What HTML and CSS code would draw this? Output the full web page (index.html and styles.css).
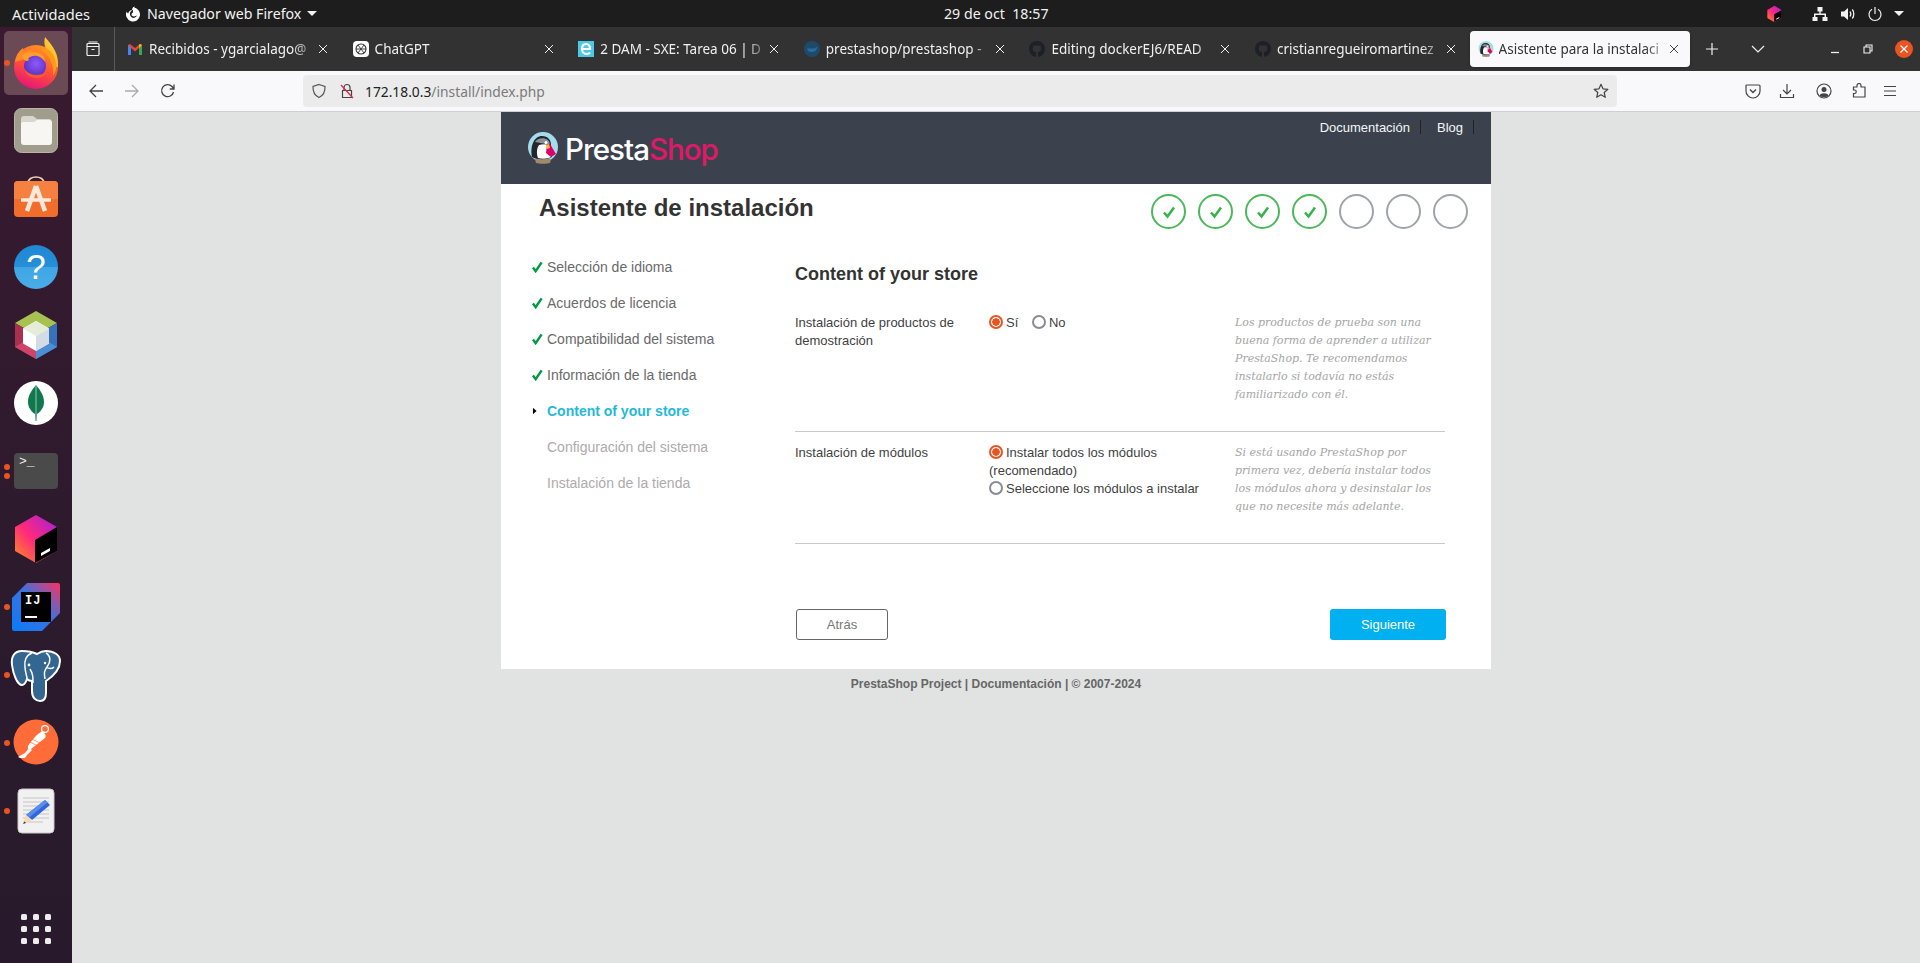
FILE: index.html
```html
<!DOCTYPE html>
<html lang="es">
<head>
<meta charset="utf-8">
<title>Asistente para la instalación</title>
<link rel="stylesheet" href="styles.css">
</head>
<body>
<svg class="defs" width="0" height="0" aria-hidden="true">
  <defs>
    <symbol id="penguin" viewBox="0 0 32 32">
      <circle cx="16" cy="15" r="15" fill="#a4dcee"/>
      <path d="M8 27c2-1 14-1 16 0l-1 4c-3 1-11 1-14 0z" fill="#a08a6c"/>
      <path d="M5 25C3 14 7 4 15 4c6 0 9 4 9 9l1 12c-5 3-15 3-20 0z" fill="#23262b"/>
      <path d="M8 10c2-4 9-5 13-2 2 2 2 4 1 5-5-2-10-2-14-3z" fill="#8d9298"/>
      <path d="M11 26c-2-5-1-10 1-13 3-1 7-1 10 0l2 12c-4 2-9 2-13 1z" fill="#fff"/>
      <path d="M20 12l3 0 6 10-5 3-5-4z" fill="#df0067"/>
      <circle cx="19" cy="10.500" r="1.500" fill="#fff"/>
      <path d="M19 13l3-1 1 4-3 1z" fill="#f7b733"/>
    </symbol>
    <symbol id="ghub" viewBox="0 0 16 16">
      <circle cx="8" cy="8" r="8" fill="#1b2029"/>
      <path d="M4.500 4l1.700.8c1.100-.3 2.500-.3 3.600 0L11.500 4l.3 2c.6 1 .7 3-.3 4-.6.7-1.500 1-2.500 1l.2 5H6.800l.2-5c-1 0-1.900-.3-2.500-1-1-1-.9-3-.3-4z" fill="#333233"/>
    </symbol>
    <symbol id="toolbox" viewBox="0 0 44 48">
      <defs>
        <linearGradient id="tbg" x1="0" y1="1" x2="1" y2="0">
          <stop offset="0" stop-color="#ff9419"/><stop offset=".45" stop-color="#ff2a7a"/><stop offset="1" stop-color="#a31ee0"/>
        </linearGradient>
      </defs>
      <path d="M22 0l21 12v24L22 48 1 36V12z" fill="url(#tbg)"/>
      <path d="M21 25l22-13v24L21 48z" fill="#000"/>
      <path d="M27 38l9-5v3l-9 5z" fill="#fff"/>
    </symbol>
  </defs>
</svg>
<div class="screen">
  <header class="topbar">
    <div class="top-left">
      <span class="activities">Actividades</span>
      <span class="app-menu">
        <svg class="ic16" viewBox="0 0 16 16"><path d="M8 1.500a7 7 0 1 1-6.300 4c.3 1 .8 1.600 1.500 2 .4-2 2-3.500 4-3.600C6.800 3 7.800 1 9.800.6 9.400 1.500 9.500 2.200 10 3c1 .2 2 1 2.300 2.200A4.200 4.200 0 1 0 8 12c2 0 3.300-1 3.800-2.400C10.500 10.500 8 11 6.800 9.500 6 8.400 6.800 6.800 8 6.500z" fill="#fff"/></svg>
        <span>Navegador web Firefox</span>
        <i class="caret"></i>
      </span>
    </div>
    <div class="clock">29 de oct &nbsp;18:57</div>
    <div class="tray">
      <svg class="tray-tb" viewBox="0 0 44 48"><use href="#toolbox"/></svg>
      <svg class="ic16 tray-net" viewBox="0 0 16 16"><path d="M5.500 1h5v4.500H8.700V7.500H14V11h1.500v4h-5v-4H12.500V9H3.500v2H5.500v4h-5v-4H2V7.500h5.300V5.500H5.500z" fill="#f2f2f2"/></svg>
      <svg class="ic16 tray-vol" viewBox="0 0 16 16"><path d="M1 5.500h3L8 2v12L4 10.500H1z" fill="#f2f2f2"/><path d="M10 5.500c1 1.500 1 3.500 0 5M12.300 3.500c2 2.500 2 6.500 0 9" fill="none" stroke="#f2f2f2" stroke-width="1.300"/></svg>
      <svg class="ic16 tray-pow" viewBox="0 0 16 16"><path d="M5 3.300a6 6 0 1 0 6 0M8 1v7" fill="none" stroke="#f2f2f2" stroke-width="1.200"/></svg>
      <i class="caret"></i>
    </div>
  </header>

  <div class="desk">
    <nav class="dock">
      <div class="dock-item active">
        <i class="pip"></i>
        <svg class="dock-ic" viewBox="0 0 56 56">
          <defs>
            <linearGradient id="ffb" x1=".3" y1="1" x2=".7" y2="0"><stop offset="0" stop-color="#e3137f"/><stop offset=".45" stop-color="#ff4b3a"/><stop offset="1" stop-color="#ff9a1a"/></linearGradient>
            <linearGradient id="ffy" x1="0" y1="1" x2=".6" y2="0"><stop offset="0" stop-color="#ff8a1a"/><stop offset="1" stop-color="#ffe13f"/></linearGradient>
            <radialGradient id="ffg" cx=".55" cy=".4" r=".7"><stop offset="0" stop-color="#9059ff"/><stop offset="1" stop-color="#4e2ab0"/></radialGradient>
          </defs>
          <circle cx="28" cy="32" r="22" fill="url(#ffb)"/>
          <path d="M50 32C51 20 46 12 37 2c-1 4-1 8 1 12 7 3 10 10 9 18z" fill="url(#ffy)"/>
          <path d="M38 13c5 3 9 8 10 16 1 4-1 9-3 12 1-9-2-20-12-26z" fill="#ff9a1a"/>
          <path d="M7 27c1-7 4-11 8-14 0 2 1 3 2 4 3-2 6-3 9-3-1 1-2 2-2 3 5-1 11 1 13 6-4-3-12-3-16 1-5 0-8 1-14 3z" fill="#ff8a2a"/>
          <circle cx="27" cy="31" r="11" fill="url(#ffg)"/>
          <path d="M14 20c5-3 12-4 18-1 4 2 5 5 5 8-3-5-9-8-15-5-2 1-2 2-1 3-3 2-5 1-7-5z" fill="#ff9e2a"/>
          <path d="M16 33c1 6 6 10 12 10 5 0 9-2 11-6-3 2-7 3-11 3-5 0-10-3-12-7z" fill="#ff5a2a"/>
        </svg>
      </div>
      <div class="dock-item">
        <svg class="dock-ic" viewBox="0 0 56 56">
          <rect x="6.500" y="5.500" width="43" height="44" rx="7" fill="#a19d8d" stroke="#b9b6a8"/>
          <path d="M13 16a3 3 0 0 1 3-3h9l4 3h12a2.500 2.500 0 0 1 2.500 2.500V22H13z" fill="#d9d6cd"/>
          <path d="M13 21a2 2 0 0 1 2-2h11l3-2h12a3 3 0 0 1 3 3v19a3 3 0 0 1-3 3H16a3 3 0 0 1-3-3z" fill="#f7f6f3"/>
        </svg>
      </div>
      <div class="dock-item">
        <svg class="dock-ic" viewBox="0 0 56 56">
          <path d="M20 12c0-8 16-8 16 0" fill="none" stroke="#f2d3b0" stroke-width="1.700"/>
          <rect x="6" y="10" width="44" height="36" rx="4" fill="#f26d2c"/>
          <path d="M6 14a4 4 0 0 1 4-4h36a4 4 0 0 1 4 4v14H6z" fill="#f58040"/>
          <path d="M28 15L19 40M28 15l9 25" fill="none" stroke="#fde9dc" stroke-width="4.500"/>
          <path d="M13 29h30" stroke="#fde9dc" stroke-width="3.500"/>
        </svg>
      </div>
      <div class="dock-item">
        <svg class="dock-ic" viewBox="0 0 56 56">
          <defs><linearGradient id="hlp" x1="0" y1="0" x2="0" y2="1"><stop offset="0" stop-color="#1f87d4"/><stop offset=".5" stop-color="#268fd8"/><stop offset=".5" stop-color="#3fa5e4"/><stop offset="1" stop-color="#49ade8"/></linearGradient></defs>
          <circle cx="28" cy="28" r="22" fill="url(#hlp)"/>
        </svg>
        <span class="help-q">?</span>
      </div>
      <div class="dock-item">
        <svg class="dock-ic" viewBox="0 0 56 56">
          <path d="M28 4L49 16 28 28 7 16z" fill="#a8c252"/>
          <path d="M7 16l21 12v24L7 40z" fill="#a9314f"/>
          <path d="M49 16L28 28v24l21-12z" fill="#3572bb"/>
          <path d="M7 40l10-6 11 6v12z" fill="#cf4468"/>
          <path d="M49 40l-10-6-11 6v12z" fill="#4a8fd6"/>
          <path d="M28 14l13 7.500v15L28 44l-13-7.500v-15z" fill="#fff"/>
          <path d="M28 14l13 7.500L28 29l-13-7.500z" fill="#e7ecd9"/>
          <path d="M41 21.500v15L28 44V29z" fill="#d3dbe4"/>
        </svg>
      </div>
      <div class="dock-item">
        <svg class="dock-ic" viewBox="0 0 56 56">
          <circle cx="28" cy="28" r="22" fill="#fff"/>
          <path d="M28 10c5 6 8 11 8 17 0 6-4 10-7 12l-.5 7h-1l-.5-7c-3-2-7-6-7-12 0-6 3-11 8-17z" fill="#10784f"/>
          <path d="M28 10v36" stroke="#b8d8c8" stroke-width=".8"/>
        </svg>
      </div>
      <div class="dock-item">
        <i class="pip up"></i><i class="pip down"></i>
        <div class="term"><span class="term-p">&gt;_</span></div>
      </div>
      <div class="dock-item">
        <svg class="dock-ic tb" viewBox="0 0 44 48"><use href="#toolbox"/></svg>
      </div>
      <div class="dock-item">
        <i class="pip"></i>
        <div class="idea">
          <svg class="idea-bg" viewBox="0 0 48 48">
            <defs><linearGradient id="ijg" x1="0" y1="1" x2="1" y2="0"><stop offset="0" stop-color="#087cfa"/><stop offset=".55" stop-color="#3d72e0"/><stop offset="1" stop-color="#fe315d"/></linearGradient></defs>
            <path d="M15 0h31a2 2 0 0 1 2 2v28L30 48H2a2 2 0 0 1-2-2V15z" fill="url(#ijg)"/>
          </svg>
          <div class="idea-box"><span class="idea-t">IJ</span><i class="idea-l"></i></div>
        </div>
      </div>
      <div class="dock-item">
        <i class="pip"></i>
        <svg class="dock-ic" viewBox="0 0 56 56">
          <path d="M14 4C6 4 3 10 4 18c1 8 5 20 10 20 3 0 4-3 5-6 2 2 4 2 5 2v10c0 7 4 10 8 10 5 0 6-4 6-8V34c6-4 14-10 14-20 0-6-6-10-14-10-4 0-6 1-9 3-4-2-10-3-15-3z" fill="#336791" stroke="#fff" stroke-width="2"/>
          <path d="M24 6c-6 2-8 8-7 14 0 5 2 8 2 12M25 36c0-6 0-9-3-14M38 6c5 3 5 9 1 14-3 4-3 6-2 12M38 20c3 2 6 2 8 0" fill="none" stroke="#fff" stroke-width="1.500"/>
          <circle cx="21" cy="18" r="1.400" fill="#fff"/><circle cx="37" cy="16" r="1.200" fill="#fff"/>
        </svg>
      </div>
      <div class="dock-item">
        <i class="pip"></i>
        <svg class="dock-ic" viewBox="0 0 56 56">
          <circle cx="28" cy="27" r="22.500" fill="#ff6c37"/>
          <circle cx="37" cy="14" r="3.400" fill="none" stroke="#fff" stroke-width="1.300"/>
          <path d="M33 17c-4 2-9 8-13 14-1 2 1 4 3 3l14-11c2-2-1-7-4-6zM21 33l-4 5-2 1-5 3 2 1h5l2-3 5-5z" fill="#fff"/>
          <path d="M22 27l8 4M24 24l8 4" stroke="#ff6c37" stroke-width=".7"/>
        </svg>
      </div>
      <div class="dock-item">
        <i class="pip"></i>
        <svg class="dock-ic" viewBox="0 0 56 56">
          <rect x="10" y="6" width="36" height="44" rx="4" fill="#f1f1f1" stroke="#c9c9c9"/>
          <path d="M15 15h26M15 19h26M15 23h26M15 27h26M15 31h26M15 35h26M15 39h20" stroke="#c6c6c6" stroke-width="1.200"/>
          <path d="M37 17l5 5-18 15-6-5z" fill="#2f68d8"/>
          <path d="M37 17l2.500 2.500L21 34.500 18 32z" fill="#5a8cec"/>
          <path d="M18 32l6 5-9 4z" fill="#f6d9b5"/>
          <path d="M16.500 38.500l-1.500 2.500 3-1z" fill="#333"/>
        </svg>
      </div>
      <div class="dock-grid">
        <i></i><i></i><i></i><i></i><i></i><i></i><i></i><i></i><i></i>
      </div>
    </nav>

    <div class="browser">
      <div class="tabbar">
        <div class="tabview">
          <svg class="ic16" viewBox="0 0 16 16"><path d="M2 5.500h12v8a1 1 0 0 1-1 1H3a1 1 0 0 1-1-1zM2 5.500v-2a1 1 0 0 1 1-1h10a1 1 0 0 1 1 1v2M3.500 1h9M6.500 8.500h3" fill="none" stroke="#f0f0f0" stroke-width="1.200"/></svg>
        </div>
        <div class="tabs">
          <div class="tab">
            <svg class="fav" viewBox="0 0 16 16"><path d="M1 14V4l2-1 5 4 5-4 2 1v10h-3V7L8 10.500 4 7v7z" fill="#ea4335"/><path d="M1 14V4l3 2.500V14z" fill="#4285f4"/><path d="M15 14V4l-3 2.500V14z" fill="#34a853"/><path d="M15 4l-3 3V3.800l1-.8z" fill="#fbbc04"/></svg>
            <span class="tab-title">Recibidos - ygarcialago@</span>
            <svg class="tab-x" viewBox="0 0 10 10"><path d="M1 1l8 8M9 1L1 9"/></svg>
          </div>
          <div class="tab">
            <svg class="fav" viewBox="0 0 16 16"><rect width="16" height="16" rx="4" fill="#fff"/><circle cx="8" cy="8" r="5" fill="none" stroke="#333" stroke-width="1.100"/><path d="M5 4l6 8M11 4l-6 8M3 8h10" stroke="#333" stroke-width=".9"/></svg>
            <span class="tab-title">ChatGPT</span>
            <svg class="tab-x" viewBox="0 0 10 10"><path d="M1 1l8 8M9 1L1 9"/></svg>
          </div>
          <div class="tab">
            <svg class="fav" viewBox="0 0 16 16"><rect width="16" height="16" fill="#4cc9e8"/><path d="M4 8h8c0-3-1.500-5-4-5S4 5 4 8c0 3 2 5 4.500 5 1.500 0 3-.5 3.500-1.500" fill="none" stroke="#fff" stroke-width="2.200"/></svg>
            <span class="tab-title">2 DAM - SXE: Tarea 06 | D</span>
            <svg class="tab-x" viewBox="0 0 10 10"><path d="M1 1l8 8M9 1L1 9"/></svg>
          </div>
          <div class="tab">
            <svg class="fav" viewBox="0 0 16 16"><circle cx="8" cy="8" r="8" fill="#1d4a6b"/><path d="M3 7.500h8c.5-1 1-1.500 2-1.500 0 2-1 5-5 5-3 0-4.500-1-5-3.500z" fill="#2a6d99"/></svg>
            <span class="tab-title">prestashop/prestashop -</span>
            <svg class="tab-x" viewBox="0 0 10 10"><path d="M1 1l8 8M9 1L1 9"/></svg>
          </div>
          <div class="tab">
            <svg class="fav" viewBox="0 0 16 16"><use href="#ghub"/></svg>
            <span class="tab-title">Editing dockerEJ6/READ</span>
            <svg class="tab-x" viewBox="0 0 10 10"><path d="M1 1l8 8M9 1L1 9"/></svg>
          </div>
          <div class="tab">
            <svg class="fav" viewBox="0 0 16 16"><use href="#ghub"/></svg>
            <span class="tab-title">cristianregueiromartinez</span>
            <svg class="tab-x" viewBox="0 0 10 10"><path d="M1 1l8 8M9 1L1 9"/></svg>
          </div>
          <div class="tab current">
            <svg class="fav" viewBox="0 0 32 32"><use href="#penguin"/></svg>
            <span class="tab-title">Asistente para la instalaci</span>
            <svg class="tab-x" viewBox="0 0 10 10"><path d="M1 1l8 8M9 1L1 9"/></svg>
          </div>
        </div>
        <span class="newtab">
          <svg class="ic16" viewBox="0 0 16 16"><path d="M8 2v12M2 8h12" stroke="#f0f0f0" stroke-width="1.200"/></svg>
        </span>
        <span class="alltabs">
          <svg class="ic16" viewBox="0 0 16 16"><path d="M2 5l6 6 6-6" fill="none" stroke="#f0f0f0" stroke-width="1.200"/></svg>
        </span>
        <div class="winctl">
          <svg class="ic16" viewBox="0 0 16 16"><path d="M4 11.500h8" stroke="#f0f0f0" stroke-width="1.300"/></svg>
          <svg class="ic16" viewBox="0 0 16 16"><path d="M6 5.500V4h6v6h-2M4 6h6v6H4z" fill="none" stroke="#f0f0f0" stroke-width="1.100"/></svg>
          <span class="win-close"><svg viewBox="0 0 12 12"><path d="M2.500 2.500l7 7M9.500 2.500l-7 7" stroke="#fff" stroke-width="1.300"/></svg></span>
        </div>
      </div>

      <div class="toolbar">
        <div class="nav-btns">
          <svg class="ic16" viewBox="0 0 16 16"><path d="M15 8H2M8 2L2 8l6 6" fill="none" stroke="#444" stroke-width="1.300"/></svg>
          <svg class="ic16" viewBox="0 0 16 16"><path d="M1 8h13M8 2l6 6-6 6" fill="none" stroke="#aaa" stroke-width="1.300"/></svg>
          <svg class="ic16" viewBox="0 0 16 16"><path d="M13.500 9A6 6 0 1 1 12 3.500L14 6M14 1.500V6H9.800" fill="none" stroke="#444" stroke-width="1.300"/></svg>
        </div>
        <div class="urlbar">
          <svg class="ic16" viewBox="0 0 16 16"><path d="M8 1.500l6 2c.2 5-1.500 9-6 11-4.500-2-6.200-6-6-11z" fill="none" stroke="#555" stroke-width="1.200"/></svg>
          <svg class="ic16" viewBox="0 0 16 16"><path d="M3.500 7.500h9v7h-9zM5 7.500V4.500a3 3 0 0 1 6 0v3" fill="none" stroke="#444" stroke-width="1.200"/><path d="M2 2l12 13" stroke="#e22850" stroke-width="1.300"/></svg>
          <span class="url"><span class="host">172.18.0.3</span>/install/index.php</span>
          <svg class="ic16 star" viewBox="0 0 16 16"><path d="M8 1.300l2 4.500 4.900.5-3.700 3.200 1.100 4.800L8 11.800l-4.300 2.500 1.100-4.800L1.100 6.300 6 5.800z" fill="none" stroke="#444" stroke-width="1.200" stroke-linejoin="round"/></svg>
        </div>
        <div class="tool-right">
          <svg class="ic16" viewBox="0 0 16 16"><path d="M2 2h12a1 1 0 0 1 1 1v5a7 7 0 0 1-14 0V3a1 1 0 0 1 1-1z" fill="none" stroke="#444" stroke-width="1.200"/><path d="M5 6.500l3 3 3-3" fill="none" stroke="#444" stroke-width="1.400"/></svg>
          <svg class="ic16" viewBox="0 0 16 16"><path d="M8 1v9.500M4 7l4 4 4-4M1.500 11v3.500h13V11" fill="none" stroke="#444" stroke-width="1.200"/></svg>
          <svg class="ic16" viewBox="0 0 16 16"><circle cx="8" cy="8" r="7" fill="none" stroke="#444" stroke-width="1.200"/><circle cx="8" cy="6.500" r="2.500" fill="#444"/><path d="M3.500 12.500c1-3 8-3 9 0-2 2-7 2-9 0z" fill="#444"/></svg>
          <svg class="ic16" viewBox="0 0 16 16"><path d="M6 2.500a2 2 0 0 1 4 0V4h4v10H2.500v-3.500h1a1.700 1.700 0 0 0 0-3.500h-1V4H6z" fill="none" stroke="#444" stroke-width="1.200"/></svg>
          <svg class="ic16" viewBox="0 0 16 16"><path d="M2 3.500h12M2 8h12M2 12.500h12" stroke="#444" stroke-width="1.200"/></svg>
        </div>
      </div>

      <main class="page">
        <div class="sheet">
          <div class="ps-head">
            <div class="logo">
              <svg class="logo-mark" viewBox="0 0 32 32"><use href="#penguin"/></svg>
              <span class="logo-text">Presta<span class="logo-shop">Shop</span></span>
            </div>
            <ul class="ps-links">
              <li>Documentación</li>
              <li>Blog</li>
            </ul>
          </div>
          <div class="ps-white">
            <div class="title-row">
              <h1>Asistente de instalación</h1>
              <div class="steps">
                <span class="step done"><svg viewBox="0 0 14 14"><path d="M2 7.500l3.500 4L12 2.500" fill="none" stroke="#35b34a" stroke-width="2.500"/></svg></span>
                <span class="step done"><svg viewBox="0 0 14 14"><path d="M2 7.500l3.500 4L12 2.500" fill="none" stroke="#35b34a" stroke-width="2.500"/></svg></span>
                <span class="step done"><svg viewBox="0 0 14 14"><path d="M2 7.500l3.500 4L12 2.500" fill="none" stroke="#35b34a" stroke-width="2.500"/></svg></span>
                <span class="step done"><svg viewBox="0 0 14 14"><path d="M2 7.500l3.500 4L12 2.500" fill="none" stroke="#35b34a" stroke-width="2.500"/></svg></span>
                <span class="step"></span>
                <span class="step"></span>
                <span class="step"></span>
              </div>
            </div>
            <div class="ps-body">
              <ol class="side">
                <li class="ok"><svg viewBox="0 0 12 12"><path d="M1 6.500l3 4L10.500 1" fill="none" stroke="#009a44" stroke-width="2.700"/></svg>Selección de idioma</li>
                <li class="ok"><svg viewBox="0 0 12 12"><path d="M1 6.500l3 4L10.500 1" fill="none" stroke="#009a44" stroke-width="2.700"/></svg>Acuerdos de licencia</li>
                <li class="ok"><svg viewBox="0 0 12 12"><path d="M1 6.500l3 4L10.500 1" fill="none" stroke="#009a44" stroke-width="2.700"/></svg>Compatibilidad del sistema</li>
                <li class="ok"><svg viewBox="0 0 12 12"><path d="M1 6.500l3 4L10.500 1" fill="none" stroke="#009a44" stroke-width="2.700"/></svg>Información de la tienda</li>
                <li class="now"><svg viewBox="0 0 12 12"><path d="M1 2.500l4 3.500-4 3.500z" fill="#000"/></svg>Content of your store</li>
                <li class="todo"><i class="blank"></i>Configuración del sistema</li>
                <li class="todo"><i class="blank"></i>Instalación de la tienda</li>
              </ol>
              <form class="store">
                <h2>Content of your store</h2>
                <div class="field">
                  <div class="f-label">Instalación de productos de demostración</div>
                  <div class="f-ctl">
                    <span class="opt"><i class="radio on"></i>Sí</span>
                    <span class="opt second"><i class="radio"></i>No</span>
                  </div>
                  <p class="f-help">Los productos de prueba son una buena forma de aprender a utilizar PrestaShop. Te recomendamos instalarlo si todavía no estás familiarizado con él.</p>
                </div>
                <div class="field">
                  <div class="f-label">Instalación de módulos</div>
                  <div class="f-ctl">
                    <div><i class="radio on"></i>Instalar todos los módulos (recomendado)</div>
                    <div><i class="radio"></i>Seleccione los módulos a instalar</div>
                  </div>
                  <p class="f-help">Si está usando PrestaShop por primera vez, debería instalar todos los módulos ahora y desinstalar los que no necesite más adelante.</p>
                </div>
                <div class="actions">
                  <span class="btn back">Atrás</span>
                  <span class="btn next">Siguiente</span>
                </div>
              </form>
            </div>
          </div>
          <footer class="ps-foot">PrestaShop Project | Documentación | © 2007-2024</footer>
        </div>
      </main>
    </div>
  </div>
</div>
</body>
</html>
```

FILE: styles.css
```css
* { box-sizing: border-box; }
html, body { margin: 0; padding: 0; height: 963px; overflow: hidden; background: #e1e3e2; }
body { font-family: "Noto Sans", sans-serif; }
.defs { position: absolute; }
i { display: block; }
.ic16 { width: 16px; height: 16px; display: block; flex: none; }

.screen { width: 1920px; height: 963px; display: flex; flex-direction: column; }

/* Top bar */
.topbar { height: 27px; background: #1d1d1d; color: #f2f2f2; display: flex; align-items: center; font-size: 14.200px; flex: none; }
.top-left { flex: 0 0 944px; display: flex; align-items: center; padding-left: 12px; }
.activities { width: 113px; font-size: 14.600px; }
.app-menu { display: flex; align-items: center; gap: 6px; }
.caret { width: 0; height: 0; border-left: 5px solid transparent; border-right: 5px solid transparent; border-top: 5px solid #f2f2f2; }
.clock { flex: 0 0 auto; width: 104px; white-space: nowrap; font-size: 14.200px; }
.tray { flex: 1; display: flex; align-items: center; padding-left: 719px; }
.tray-tb { width: 15px; height: 18px; display: block; flex: none; }
.tray-net { margin-left: 30px; }
.tray-vol { margin-left: 12px; }
.tray-pow { margin-left: 11px; }
.tray .caret { margin-left: 11px; }

.desk { flex: 1; display: flex; min-height: 0; }

/* Dock */
.dock { width: 72px; flex: none; background: linear-gradient(180deg, #3a1a30 0%, #2c1a2d 60%, #281a2c 100%); display: flex; flex-direction: column; align-items: center; padding-top: 4px; gap: 4px; }
.dock-item { width: 64px; height: 64px; flex: none; position: relative; display: flex; align-items: center; justify-content: center; border-radius: 5px; }
.dock-item.active { background: #6a4a54; }
.dock-ic { width: 56px; height: 56px; display: block; }
.dock-ic.tb { width: 44px; height: 48px; }
.pip { position: absolute; left: 0; top: 29px; width: 6px; height: 6px; border-radius: 50%; background: #e95420; }
.pip.up { top: 25px; }
.pip.down { top: 34px; }
.help-q { position: absolute; inset: 0; display: flex; align-items: center; justify-content: center; color: #fff; font: 400 35px "Liberation Sans", sans-serif; }
.term { width: 44px; height: 36px; border-radius: 4px; background: #4a4a4a; color: #eee; padding: 1px 0 0 5px; }
.term-p { font: 400 13px/15px "Liberation Mono", monospace; display: block; }
.idea { width: 48px; height: 48px; position: relative; }
.idea-bg { width: 48px; height: 48px; display: block; }
.idea-box { position: absolute; left: 9px; top: 9px; width: 30px; height: 30px; background: #000; color: #fff; padding: 3px 0 0 4px; }
.idea-t { display: block; font: 700 12px/12px "Liberation Mono", monospace; letter-spacing: 1px; }
.idea-l { width: 12px; height: 2px; background: #fff; margin-top: 9px; }
.dock-grid { margin-top: auto; margin-bottom: 19px; display: grid; grid-template-columns: repeat(3, 6px); gap: 6px; }
.dock-grid i { width: 6px; height: 6px; border-radius: 1.500px; background: #ededed; }

/* Browser chrome */
.browser { flex: 1; display: flex; flex-direction: column; min-width: 0; }
.tabbar { height: 44px; flex: none; background: #333233; display: flex; align-items: center; color: #f0f0f0; font-size: 13.500px; }
.tabview { width: 43px; height: 44px; border-right: 1px solid #5b5a5b; display: flex; align-items: center; justify-content: center; flex: none; }
.tabs { display: flex; flex: none; margin-left: 1px; }
.tab { flex: 0 0 225.600px; min-width: 0; height: 36px; display: flex; align-items: center; padding: 0 10.600px 0 11px; gap: 6px; }
.tab.current { flex: 0 0 220px; background: #f9f9fb; color: #333; border-radius: 4px; box-shadow: 0 0 3px rgba(0,0,0,.3); padding: 0 7.600px 0 8px; gap: 5px; }
.fav { width: 16px; height: 16px; flex: none; display: block; }
.tab-title { flex: 1; min-width: 0; white-space: nowrap; overflow: hidden; -webkit-mask-image: linear-gradient(90deg, #000 90%, rgba(0,0,0,.4) 100%); mask-image: linear-gradient(90deg, #000 90%, rgba(0,0,0,.4) 100%); }
.tab-x { flex: none; width: 16px; height: 10px; display: block; fill: none; stroke: #f0f0f0; stroke-width: 1; }
.current .tab-x { stroke: #444; }
.newtab { margin-left: 14px; flex: none; }
.alltabs { margin-left: 30px; flex: none; }
.winctl { margin-left: auto; display: flex; align-items: center; gap: 17px; padding-right: 7px; flex: none; }
.win-close { width: 18px; height: 18px; margin-left: 2px; border-radius: 50%; background: #e95420; display: flex; align-items: center; justify-content: center; }
.win-close svg { width: 12px; height: 12px; display: block; }

.toolbar { height: 41px; flex: none; background: #f9f9fb; border-bottom: 1px solid #cfcfd0; display: flex; align-items: center; }
.nav-btns { display: flex; gap: 20px; padding-left: 16px; width: 231px; flex: none; }
.urlbar { width: 1314px; height: 32px; flex: none; background: #ebebeb; border-radius: 4px; display: flex; align-items: center; padding: 0 8px; gap: 12px; font-size: 13.800px; color: #7a7a7a; }
.url { flex: 1; margin-left: -2px; }
.host { color: #222; }
.tool-right { flex: 1; display: flex; align-items: center; gap: 19px; padding-left: 128px; }
.tool-right svg:nth-child(2) { margin-left: -1px; }
.tool-right svg:nth-child(3) { margin-left: 2px; }
.tool-right svg:nth-child(5) { margin-left: -4px; }

/* Page */
.page { flex: 1; min-height: 0; background: #e1e3e2; font-family: "Liberation Sans", Arial, sans-serif; }
.sheet { width: 990px; margin: 0 auto; }
.ps-head { height: 72px; background: #3b424d; display: flex; justify-content: space-between; }
.logo { display: flex; align-items: center; padding-left: 26px; gap: 6px; height: 72px; }
.logo-mark { width: 32px; height: 32px; display: block; }
.logo-text { font: 500 29.500px/34px "Inter", sans-serif; color: #fff; letter-spacing: -1px; margin-top: 1px; }
.logo-shop { color: #e0186a; }
.ps-links { list-style: none; margin: 0; padding: 8px 17px 0 0; display: flex; height: 25px; font-size: 13px; line-height: 16px; color: #f4f6f8; }
.ps-links li { border-right: 1px solid #1f2329; padding-right: 10px; margin-left: 16px; height: 14px; }

.ps-white { background: #fff; height: 485px; }
.title-row { display: flex; justify-content: space-between; padding: 10px 23px 0 38px; height: 45px; }
h1 { margin: 0; font-size: 24px; line-height: 28px; font-weight: 700; color: #333; }
.steps { display: flex; gap: 12px; }
.step { width: 35px; height: 35px; border-radius: 50%; border: 2px solid #9fa3aa; display: flex; align-items: center; justify-content: center; }
.step.done { border-color: #4cb85a; }
.step svg { width: 14px; height: 14px; display: block; }

.ps-body { display: flex; padding-top: 20px; }
.side { list-style: none; margin: 0; padding: 0 0 0 31px; width: 294px; flex: none; font-size: 14px; color: #6a6a6a; }
.side li { height: 36px; display: flex; align-items: center; gap: 4px; }
.side li svg, .side .blank { width: 11px; height: 12px; flex: none; display: block; }
.side .now { color: #25b9d7; font-weight: 700; }
.side .todo { color: #aeaaad; }

.store { width: 650px; flex: none; padding-top: 14px; font-size: 13px; line-height: 18px; color: #3f3f3f; }
h2 { margin: 0 0 29px; font-size: 18px; line-height: 22px; font-weight: 700; color: #333; }
.field { display: grid; grid-template-columns: 194px 246px 210px; padding-bottom: 27px; border-bottom: 1px solid #c9c9c9; margin-bottom: 12px; }
.f-label { padding-right: 20px; }
.f-ctl { padding-right: 20px; }
.opt { display: inline-block; }
.opt.second { margin-left: 10px; }
.radio { display: inline-block; width: 14px; height: 14px; border-radius: 50%; border: 2px solid #8a8a96; background: #fff; vertical-align: -2px; margin-right: 3px; }
.radio.on { border-color: #e95420; background: radial-gradient(circle, #e95420 0 3.500px, #fff 4px); }
.f-help { margin: 0; font: italic 11px/18px "DejaVu Serif", serif; color: #a5a5a5; }
.actions { display: flex; justify-content: space-between; padding-left: 1px; margin-top: 65px; }
.btn { height: 31px; border-radius: 3px; display: flex; align-items: center; justify-content: center; font-size: 13px; padding-top: 1px; }
.back { width: 92px; border: 1px solid #666; color: #777; }
.next { width: 116px; background: #00b0f0; color: #fff; margin-right: -1px; }
.ps-foot { padding-top: 7px; text-align: center; font-size: 12px; line-height: 16px; font-weight: 700; color: #666; }
```
